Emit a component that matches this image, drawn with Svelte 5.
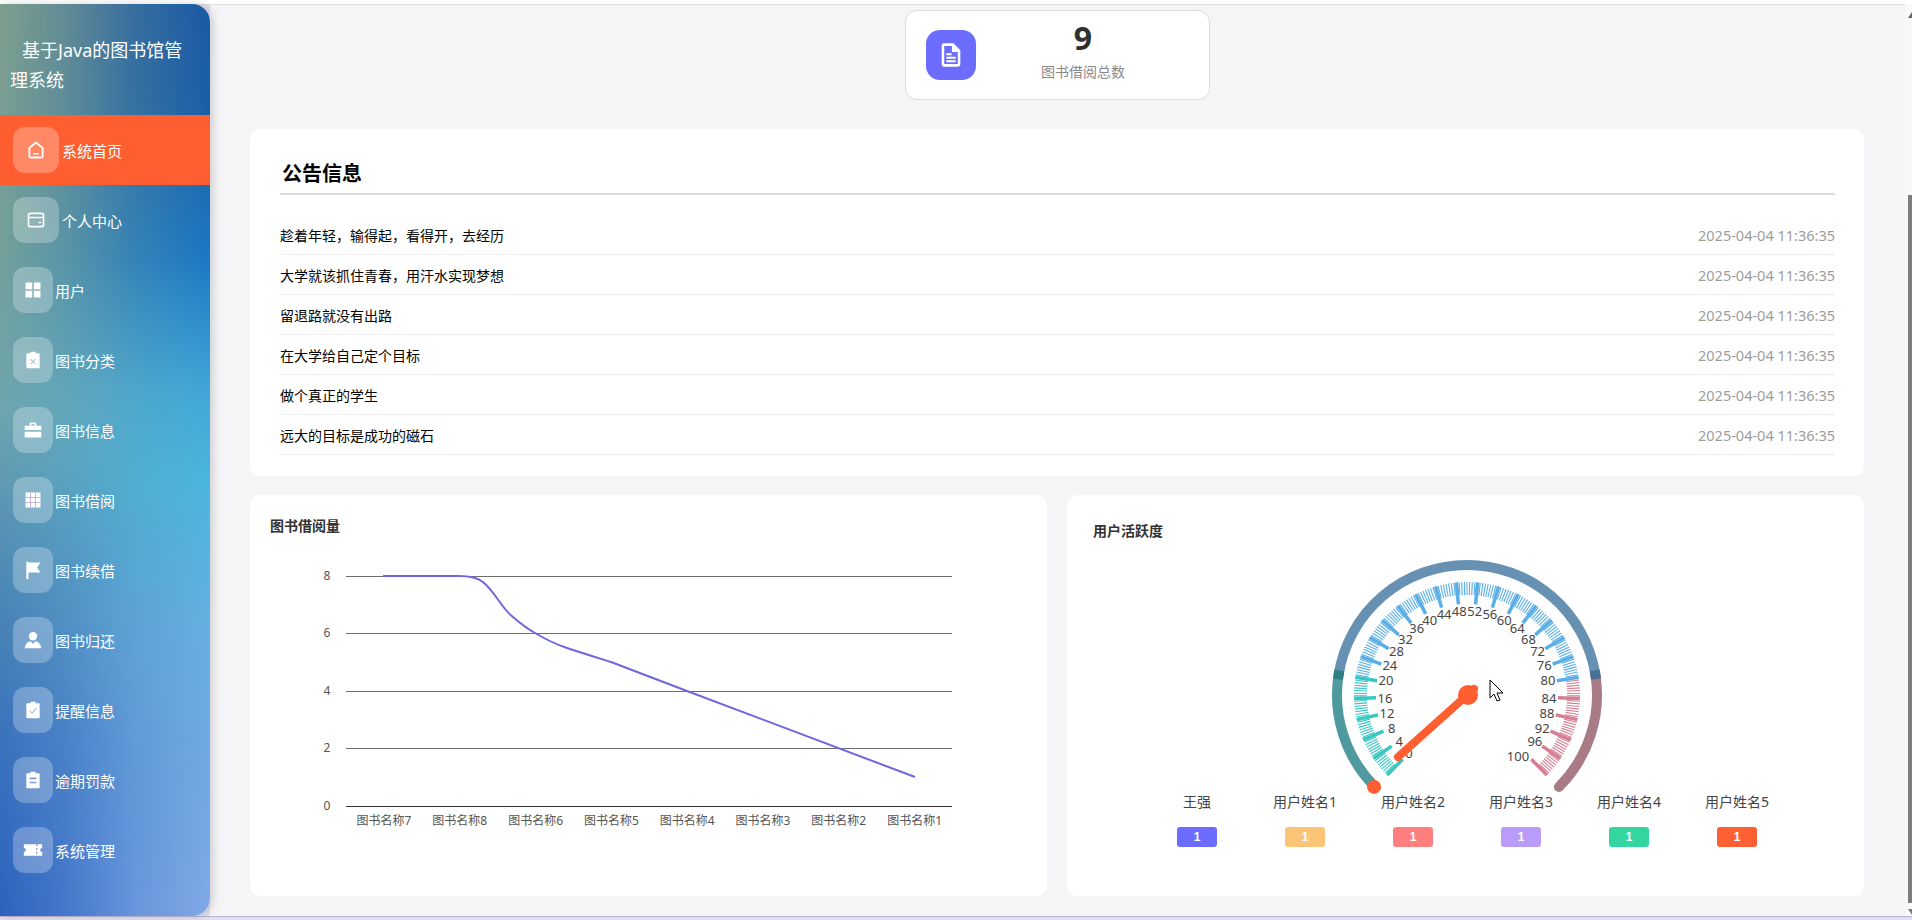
<script>
  const nav = [
    { t: '系统首页', i: 'home', active: true, wide: true },
    { t: '个人中心', i: 'wallet', wide: true },
    { t: '用户', i: 'grid' },
    { t: '图书分类', i: 'clipx' },
    { t: '图书信息', i: 'case' },
    { t: '图书借阅', i: 'table' },
    { t: '图书续借', i: 'flag' },
    { t: '图书归还', i: 'user' },
    { t: '提醒信息', i: 'clipok' },
    { t: '逾期罚款', i: 'clip' },
    { t: '系统管理', i: 'ticket' }
  ];
  const notices = ['趁着年轻，输得起，看得开，去经历', '大学就该抓住青春，用汗水实现梦想', '留退路就没有出路', '在大学给自己定个目标', '做个真正的学生', '远大的目标是成功的磁石'];
  const legend = [
    ['王强', '#6c6cff'], ['用户姓名1', '#fcc476'], ['用户姓名2', '#ff7f7f'],
    ['用户姓名3', '#b99bfa'], ['用户姓名4', '#34d6a0'], ['用户姓名5', '#ff6033']
  ];
  const yTicks = [[8, 81.5], [6, 138.5], [4, 196.5], [2, 253.5], [0, 311.5]];
  const xNames = ['图书名称7', '图书名称8', '图书名称6', '图书名称5', '图书名称4', '图书名称3', '图书名称2', '图书名称1'];

  const cx = 200, cy = 200;
  function pt(deg, r) {
    const a = (deg * Math.PI) / 180;
    return [cx + r * Math.cos(a), cy - r * Math.sin(a)];
  }
  function arc(a0, a1, r) {
    const [x0, y0] = pt(a0, r), [x1, y1] = pt(a1, r);
    const large = a0 - a1 > 180 ? 1 : 0;
    return `M${x0.toFixed(2)} ${y0.toFixed(2)}A${r} ${r} 0 ${large} 1 ${x1.toFixed(2)} ${y1.toFixed(2)}`;
  }
  const valAngle = (v) => 225 - 2.7 * v;
  const tickColor = (v) => (v <= 20 ? '#38c6c0' : v <= 80 ? '#5aaee6' : '#d67f92');
  const ticks = [];
  for (let v = 0; v <= 100; v += 0.5) {
    const [x1, y1] = pt(valAngle(v), 113);
    const [x2, y2] = pt(valAngle(v), 100);
    ticks.push({ x1, y1, x2, y2, c: tickColor(v) });
  }
  const majors = [];
  for (let v = 0; v <= 100; v += 4) {
    const d = valAngle(v);
    const [x1, y1] = pt(d, 113);
    const [x2, y2] = pt(d, 91);
    const [lx, ly] = pt(d, 82);
    const nudgeY = ly < 200 ? -2 : v === 100 ? 3 : 0;
    const nudgeX = v === 100 ? -7 : 0;
    majors.push({ v, x1, y1, x2, y2, lx: lx + nudgeX, ly: ly + nudgeY, c: tickColor(v) });
  }
</script>

<div class="page">
  <aside class="side">
    <h1 class="brand">基于Java的图书馆管理系统</h1>
    <nav>
      {#each nav as n}
        <div class="item" class:active={n.active}>
          <span class="box" class:wide={n.wide}>
            <svg class="ic" viewBox="0 0 24 24" fill="#fff">
              {#if n.i === 'home'}
                <path d="M12 3 4 9.500V19a2 2 0 0 0 2 2h12a2 2 0 0 0 2-2V9.500Z" fill="none" stroke="#fff" stroke-width="2.200" stroke-linejoin="round" />
                <path d="M9.500 16.500h5" stroke="#fff" stroke-width="2" stroke-linecap="round" />
              {:else if n.i === 'wallet'}
                <path d="M5 4h14a2 2 0 0 1 2 2v12a2 2 0 0 1-2 2H5a2 2 0 0 1-2-2V6a2 2 0 0 1 2-2Z" fill="none" stroke="#fff" stroke-width="2" />
                <path d="M3 9h18M15 15h3" stroke="#fff" stroke-width="2" />
              {:else if n.i === 'grid'}
                <path d="M3 3h8v8H3zM13 3h8v8h-8zM3 13h8v8H3zM13 13h8v8h-8z" />
              {:else if n.i === 'clipx'}
                <path d="M9 2h6v2h4a1 1 0 0 1 1 1v16a1 1 0 0 1-1 1H5a1 1 0 0 1-1-1V5a1 1 0 0 1 1-1h4Z" />
                <path d="m9 11 6 6m0-6-6 6" stroke="#8fb0ba" stroke-width="1.200" />
              {:else if n.i === 'case'}
                <path d="M9 3h6a1 1 0 0 1 1 1v3h6v5H2V7h6V4a1 1 0 0 1 1-1Zm1 2v2h4V5ZM2 14h20v7H2Z" />
              {:else if n.i === 'table'}
                <path d="M3 3h18v18H3z" />
                <path d="M3 9h18M3 15h18M9 3v18M15 3v18" stroke="#b7a9d8" stroke-width="1" />
              {:else if n.i === 'flag'}
                <path d="M4 2h2.600v21H4z" />
                <path d="M6 3h15l-4 6 4 6H6Z" />
              {:else if n.i === 'user'}
                <circle cx="12" cy="7.500" r="5" />
                <path d="M2 22c1-6 4-8 7-8.500l3 3 3-3c3 .5 6 2.500 7 8.500Z" />
              {:else if n.i === 'clipok'}
                <path d="M9 2h6v2h4a1 1 0 0 1 1 1v16a1 1 0 0 1-1 1H5a1 1 0 0 1-1-1V5a1 1 0 0 1 1-1h4Z" />
                <path d="m8 13 3 3 5-6" fill="none" stroke="#8ba9d6" stroke-width="1.200" />
              {:else if n.i === 'clip'}
                <path d="M9 2h6v2h4a1 1 0 0 1 1 1v16a1 1 0 0 1-1 1H5a1 1 0 0 1-1-1V5a1 1 0 0 1 1-1h4Z" />
                <path d="M8 10h8M8 15h8" stroke="#7d9bd8" stroke-width="2" />
              {:else}
                <path d="M1 5h22v4.500a2.500 2.500 0 0 0 0 5V19H1v-4.500a2.500 2.500 0 0 0 0-5Z" />
                <path d="M16.500 5v14" stroke="#7d9bd8" stroke-width="1.500" stroke-dasharray="2.500 2" />
              {/if}
            </svg>
          </span>
          <span class="label">{n.t}</span>
        </div>
      {/each}
    </nav>
  </aside>

  <main class="main">
    <div class="stats">
      <div class="stat">
        <span class="stat-ic">
          <svg viewBox="0 0 24 24" width="28" height="28" fill="#fff">
            <path d="M6 2h8l6 6v12a2 2 0 0 1-2 2H6a2 2 0 0 1-2-2V4a2 2 0 0 1 2-2Zm.200 2.200v15.600h11.600V9.500h-5V4.200Z" fill-rule="evenodd" />
            <path d="M8 10.500h4.500v1.800H8zM8 13.500h8v1.800H8zM8 16.500h8v1.800H8z" />
          </svg>
        </span>
        <div class="stat-text">
          <b>9</b>
          <span>图书借阅总数</span>
        </div>
      </div>
    </div>

    <section class="card notice">
      <h2>公告信息</h2>
      <ul>
        {#each notices as t}
          <li><span>{t}</span><time>2025-04-04 11:36:35</time></li>
        {/each}
      </ul>
    </section>

    <div class="charts">
      <section class="card chart">
        <h3 class="t-left">图书借阅量</h3>
        <svg class="plot" viewBox="0 0 797 401" width="797" height="401" aria-label="图书借阅量折线图">
          {#each yTicks as [v, y]}
            <line x1="96" x2="702" y1={y} y2={y} stroke={v === 0 ? '#333' : '#6e6e6e'} stroke-width="1" />
            <text x="77" y={y - 1.5} text-anchor="middle" class="ax">{v}</text>
          {/each}
          {#each xNames as n, i}
            <text x={134 + i * 75.8} y="325" text-anchor="middle" class="ax xl">{n}</text>
          {/each}
          <path d="M133 81H209C220 81 228 83 233 87C246 98 252 114 263 122C271 129 278 134 285 138C295 144 305 149 317 153C332 158 345 162 361 167L437 196L665 282" fill="none" stroke="#7066de" stroke-width="2" />
        </svg>
      </section>

      <section class="card chart">
        <h3 class="t-right">用户活跃度</h3>
        <svg class="gauge" viewBox="0 0 400 300" width="400" height="300" aria-label="用户活跃度仪表盘">
          <path d={arc(225, 171, 130)} fill="none" stroke="#4f9a9e" stroke-width="10" stroke-linecap="round" />
          <path d={arc(9, -45, 130)} fill="none" stroke="#a87b86" stroke-width="10" stroke-linecap="round" />
          <path d={arc(171, 9, 130)} fill="none" stroke="#6691b3" stroke-width="10" />
          <path d={arc(173, 169, 130)} fill="none" stroke="#2e8083" stroke-width="10" />
          <path d={arc(11, 7, 130)} fill="none" stroke="#4a7098" stroke-width="10" />
          <circle cx={pt(225, 130)[0] - 1} cy={pt(225, 130)[1]} r="7" fill="#ff5f30" />
          {#each ticks as t}
            <line x1={t.x1} y1={t.y1} x2={t.x2} y2={t.y2} stroke={t.c} stroke-width="1.100" />
          {/each}
          {#each majors as m}
            <line x1={m.x1} y1={m.y1} x2={m.x2} y2={m.y2} stroke={m.c} stroke-width="3.500" />
            <text x={m.lx} y={m.ly} text-anchor="middle" dominant-baseline="central" class="gl">{m.v}</text>
          {/each}
          <line x1="131" y1="262" x2="207" y2="194" stroke="#ff5f30" stroke-width="8" stroke-linecap="round" />
          <circle cx="201" cy="200" r="10" fill="#ff5f30" />
          <circle cx="207" cy="194" r="4" fill="#ff5f30" />
          <path d="M223 185v18l4-4 3 7 3-1-3-7h6Z" fill="#fff" stroke="#000" stroke-width="1" />
        </svg>
        <div class="legend">
          {#each legend as [name, c]}
            <div class="leg">
              <span class="leg-name">{name}</span>
              <span class="badge" style="background:{c}">1</span>
            </div>
          {/each}
        </div>
      </section>
    </div>
  </main>

  <div class="scroll"><i class="arrow"></i><i class="thumb"></i><i class="down"></i></div>
</div>

<style>
  :global(body) { margin: 0; background: #e2e0f0; overflow: hidden; }
  .page {
    width: 1912px; height: 920px; position: relative; display: flex; box-sizing: border-box;
    padding: 4px 0; overflow: hidden;
    font-family: "Noto Sans", "Noto Sans CJK SC", sans-serif; color: #000;
  }
  .page::before { content: ""; position: absolute; inset: 0 0 auto; height: 5px; background: #fff; border-bottom: 1px solid #dedede; box-sizing: border-box; }
  .page::after { content: ""; position: absolute; inset: auto 0 0; height: 4px; background: #e2e0f0; border-top: 1px solid #b9b6d2; box-sizing: border-box; }
  .side {
    width: 210px; flex: none; position: relative; z-index: 2; border-radius: 0 18px 18px 0; overflow: hidden;
    box-shadow: 3px 0 8px rgba(0, 0, 0, .16); color: #fff;
    background: linear-gradient(180deg, #1a5aa6 0%, #1a5fa8 12%, #1c78c4 28%, #3fa6d8 42%, #4ab6de 52%, #66b0e2 68%, #74a9e4 85%, #82a9e8 100%);
  }
  .side::before {
    content: ""; position: absolute; inset: 0;
    background: linear-gradient(180deg, #7f9f8e 0%, #74a098 25%, #6ea4ae 45%, #4f8ab4 62%, #3a72bc 80%, #2c62be 100%);
    -webkit-mask-image: linear-gradient(90deg, #000 0%, rgba(0,0,0,.72) 30%, rgba(0,0,0,.28) 65%, transparent 100%);
    mask-image: linear-gradient(90deg, #000 0%, rgba(0,0,0,.72) 30%, rgba(0,0,0,.28) 65%, transparent 100%);
  }
  .brand {
    position: relative; margin: 0; height: 111px; box-sizing: border-box; padding: 31px 20px 0 10px;
    font-size: 18px; font-weight: 400; line-height: 30px; text-indent: 12px;
  }
  nav { position: relative; }
  .item { height: 70px; display: flex; align-items: center; padding-left: 13px; font-size: 15px; }
  .item.active { background: #ff5f30; }
  .box {
    width: 40px; height: 46px; border-radius: 12px; background: rgba(255, 255, 255, .26);
    display: flex; align-items: center; justify-content: center; flex: none; margin-right: 2px;
  }
  .box.wide { width: 46px; margin-right: 3px; }
  .ic { width: 20px; height: 20px; }
  .main { flex: 1; min-width: 0; background: #f5f5f8; padding: 6px 48px 0 40px; box-sizing: border-box; }
  .stats { display: flex; justify-content: center; height: 119px; }
  .stat {
    width: 305px; height: 90px; box-sizing: border-box; background: #fff; border: 1px solid #dcdce0; border-radius: 12px;
    display: flex; align-items: center; padding-left: 20px;
  }
  .stat-ic { width: 50px; height: 50px; border-radius: 14px; background: #6c6cff; display: flex; align-items: center; justify-content: center; flex: none; }
  .stat-text { flex: 1; display: flex; flex-direction: column; align-items: center; padding: 0 18px 8px 0; }
  .stat-text b { font: 700 32px/40px "Open Sans", sans-serif; color: #2f2f2f; }
  .stat-text span { font-size: 14px; line-height: 24px; color: #888; margin-top: 2px; }
  .card { background: #fff; border-radius: 10px; box-sizing: border-box; }
  .notice { height: 347px; padding: 26px 29px 0 30px; }
  .notice h2 { margin: 0 0 0 2px; font-size: 20px; font-weight: 700; line-height: 38px; }
  .notice ul { list-style: none; padding: 20px 0 0; margin: 0; border-top: 2px solid #dcdcdf; }
  .notice li { height: 40px; display: flex; justify-content: space-between; align-items: center; border-bottom: 1px solid #eeeeee; font-size: 14px; box-sizing: border-box; }
  .notice time { font-size: 14.500px; color: #9c9c9c; }
  .charts { display: flex; gap: 20px; margin-top: 19px; }
  .chart { width: 797px; height: 401px; position: relative; flex: none; }
  .chart h3 { margin: 0; position: absolute; font-size: 14px; font-weight: 700; color: #333; line-height: 20px; }
  .t-left { left: 20px; top: 21px; }
  .t-right { left: 26px; top: 26px; }
  .plot { display: block; }
  .ax { font-size: 12px; fill: #555; dominant-baseline: central; }
  .xl { font-size: 12px; }
  .gauge { position: absolute; left: 200px; top: 0; }
  .gl { font-size: 13px; fill: #464646; }
  .legend { position: absolute; left: 76px; top: 295px; display: flex; }
  .leg { width: 108px; display: flex; flex-direction: column; align-items: center; gap: 13px; }
  .leg-name { font-size: 14px; line-height: 24px; color: #444; }
  .badge { width: 40px; height: 20px; border-radius: 3px; color: #fff; font: 700 12px/20px "Liberation Sans", sans-serif; text-align: center; }
  .scroll { position: absolute; right: 0; top: 4px; bottom: 4px; width: 7px; background: #f9f9fa; z-index: 3; }
  .arrow { position: absolute; top: 8px; right: 0; border-left: 4px solid transparent; border-bottom: 6px solid #666; }
  .thumb { position: absolute; right: 0; top: 191px; bottom: 13px; width: 4px; background: #7d7d7d; }
  .down { position: absolute; bottom: 1px; right: 0; border-left: 4px solid transparent; border-top: 6px solid #7d7d7d; }
</style>
